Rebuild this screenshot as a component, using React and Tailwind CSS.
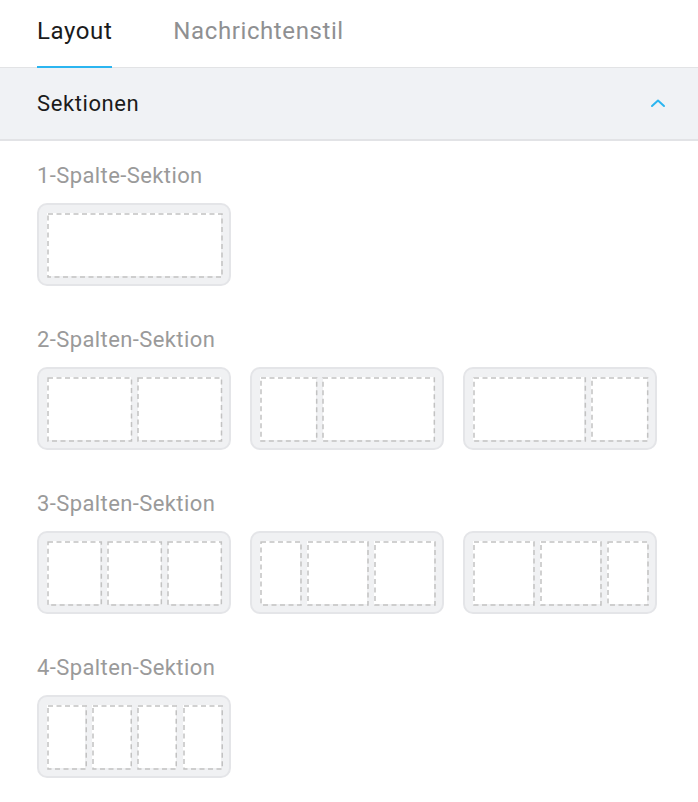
import React from "react";

function Card({ cols }) {
  return (
    <div className="w-[194px] h-[83px] rounded-[10px] border-2 border-[#e4e5e8] bg-[#f0f1f3] p-[8px] flex gap-[7px]">
      {cols.map((c, i) => (
        <div key={i} style={{ flexGrow: c }} className="relative basis-0 bg-white">
          <svg className="absolute inset-[0.75px] overflow-visible" width="100%" height="100%" preserveAspectRatio="none">
            <rect x="0" y="0" width="100%" height="100%" fill="none" stroke="#c2c2c2" strokeWidth="1.5" strokeDasharray="5 3.5" />
          </svg>
        </div>
      ))}
    </div>
  );
}

function Section({ title, rows }) {
  return (
    <div className="mb-[39px]">
      <div className="text-[22px] leading-[30px] tracking-[0.4px] text-[#9a9a9a] mb-[12px]">{title}</div>
      <div className="flex gap-[19px]">
        {rows.map((r, i) => (
          <Card key={i} cols={r} />
        ))}
      </div>
    </div>
  );
}

export default function App() {
  return (
    <div className="w-[698px] h-[802px] bg-white overflow-hidden" style={{ fontFamily: "Roboto, sans-serif" }}>
      <div className="flex h-[68px] border-b border-[#e2e3e5] pl-[37px] gap-[61px]">
        <div className="relative flex items-center h-full">
          <span className="text-[24px] tracking-[0.6px] text-[#1b1b1b] -mt-[5px]">Layout</span>
          <div className="absolute left-0 right-0 -bottom-[1px] h-[2px] bg-[#2bb5f0]" />
        </div>
        <div className="flex items-center h-full">
          <span className="text-[24px] tracking-[0.6px] text-[#8f9092] -mt-[5px]">Nachrichtenstil</span>
        </div>
      </div>
      <div className="h-[73px] bg-[#f0f2f5] border-b-2 border-[#e2e3e6] flex items-center justify-between pl-[37px] pr-[32px]">
        <span className="text-[22px] tracking-[0.6px] text-[#1b1b1b]">Sektionen</span>
        <svg width="16" height="10" viewBox="0 0 16 10" className="-mt-[2px]">
          <path d="M2 8 L8 2.5 L14 8" fill="none" stroke="#2bb5f0" strokeWidth="2" strokeLinecap="round" strokeLinejoin="round" />
        </svg>
      </div>
      <div className="pl-[37px] pt-[20px]">
        <Section title="1-Spalte-Sektion" rows={[[1]]} />
        <Section title="2-Spalten-Sektion" rows={[[1, 1], [1, 2], [2, 1]]} />
        <Section title="3-Spalten-Sektion" rows={[[1, 1, 1], [2, 3, 3], [3, 3, 2]]} />
        <Section title="4-Spalten-Sektion" rows={[[1, 1, 1, 1]]} />
      </div>
    </div>
  );
}
